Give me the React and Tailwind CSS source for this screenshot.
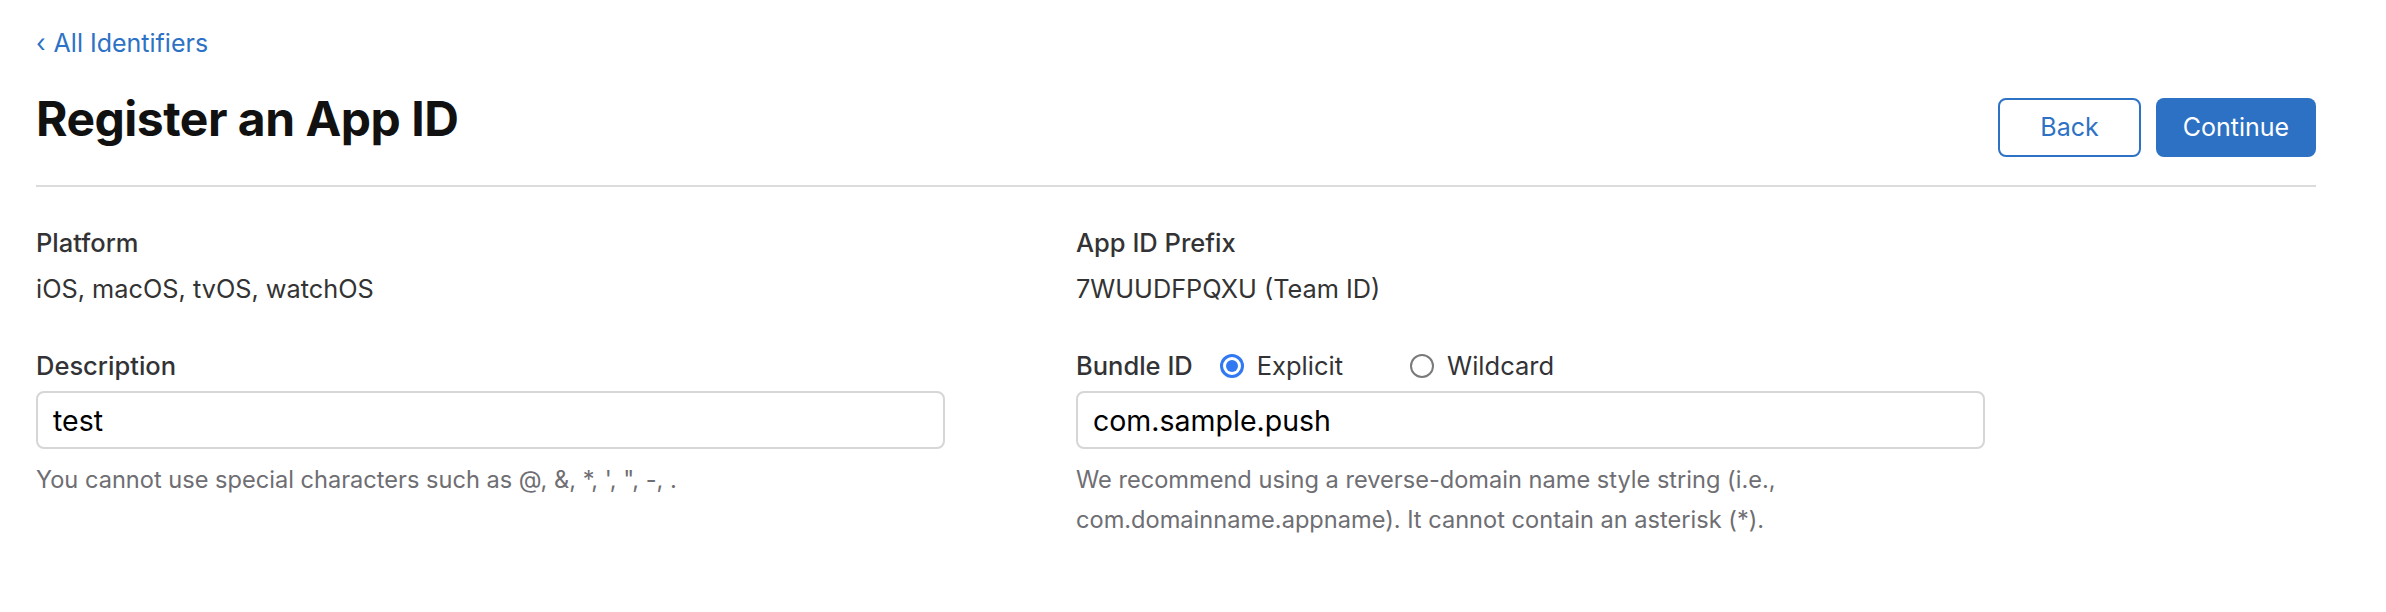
import React, { useState } from 'react';

const Radio = ({ checked, label, onClick }) => (
    <button type="button" onClick={onClick} className="flex items-center gap-[13px]">
        {checked ? (
            <span className="w-[24px] h-[24px] rounded-full border-[3px] border-[#3079f2] flex items-center justify-center bg-white">
                <span className="w-[12px] h-[12px] rounded-full bg-[#3079f2]" />
            </span>
        ) : (
            <span className="w-[24px] h-[24px] rounded-full border-2 border-[#7a7a7a] bg-white" />
        )}
        <span className="text-[25.5px] leading-[30px] text-[#333336]">{label}</span>
    </button>
);

export default function App() {
    const [mode, setMode] = useState('explicit');
    const [desc, setDesc] = useState('test');
    const [bundle, setBundle] = useState('com.sample.push');

    return (
        <div className="min-h-[612px] bg-white pl-[36px] pr-[70px] pt-[25px] font-['Inter','Liberation_Sans',sans-serif] antialiased">
            {/* breadcrumb */}
            <a href="#" className="flex items-center h-[36px] text-[25px] leading-[36px] text-[#2d72c4]">
                <span className="mr-[8px] text-[25px]">‹</span>All Identifiers
            </a>

            {/* header */}
            <div className="mt-[37px] pb-[28px] border-b-2 border-[#dcdcdc] flex items-start justify-between">
                <h1 className="-mt-[8px] text-[48px] leading-[58px] font-bold tracking-[-0.5px] text-[#111]">
                    Register an App ID
                </h1>
                <div className="flex items-center gap-[15px]">
                    <button className="w-[143px] h-[59px] rounded-[8px] border-2 border-[#2d72c4] text-[25px] text-[#2d72c4] bg-white">
                        Back
                    </button>
                    <button className="w-[160px] h-[59px] rounded-[8px] bg-[#2d71c4] text-[25px] text-white">
                        Continue
                    </button>
                </div>
            </div>

            {/* form */}
            <div className="grid grid-cols-[1040px_1fr] mt-[41px]">
                <div className="flex flex-col">
                    <div className="text-[25.5px] leading-[30px] font-medium text-[#333336]">Platform</div>
                    <div className="mt-[16px] text-[25.3px] leading-[30px] text-[#333]">iOS, macOS, tvOS, watchOS</div>
                    <div className="mt-[47px] text-[25.5px] leading-[30px] font-medium text-[#333336]">Description</div>
                    <input
                        value={desc}
                        onChange={(e) => setDesc(e?.target?.value)}
                        className="mt-[10px] w-[909px] h-[58px] rounded-[8px] border-2 border-[#d6d6d6] px-[15px] text-[28.5px] text-black outline-none"
                    />
                    <p className="mt-[11px] w-[909px] text-[23.6px] leading-[40px] text-[#6e6e73]">
                        You cannot use special characters such as @, &amp;, *, ', ", -, .
                    </p>
                </div>
                <div className="flex flex-col">
                    <div className="text-[25.5px] leading-[30px] font-medium text-[#333336]">App ID Prefix</div>
                    <div className="mt-[16px] text-[25.3px] leading-[30px] text-[#333]">7WUUDFPQXU (Team ID)</div>
                    <div className="mt-[47px] flex items-center h-[30px]">
                        <span className="text-[25.5px] leading-[30px] font-medium text-[#333336] mr-[27px]">Bundle ID</span>
                        <Radio checked={mode === 'explicit'} label="Explicit" onClick={() => setMode('explicit')} />
                        <div className="w-[67px]" />
                        <Radio checked={mode === 'wildcard'} label="Wildcard" onClick={() => setMode('wildcard')} />
                    </div>
                    <input
                        value={bundle}
                        onChange={(e) => setBundle(e?.target?.value)}
                        className="mt-[10px] w-[909px] h-[58px] rounded-[8px] border-2 border-[#d6d6d6] px-[15px] text-[28.5px] text-black outline-none"
                    />
                    <p className="mt-[11px] w-[909px] text-[23.6px] leading-[40px] text-[#6e6e73]">
                        We recommend using a reverse-domain name style string (i.e., com.domainname.appname). It cannot contain an asterisk (*).
                    </p>
                </div>
            </div>
        </div>
    );
}
